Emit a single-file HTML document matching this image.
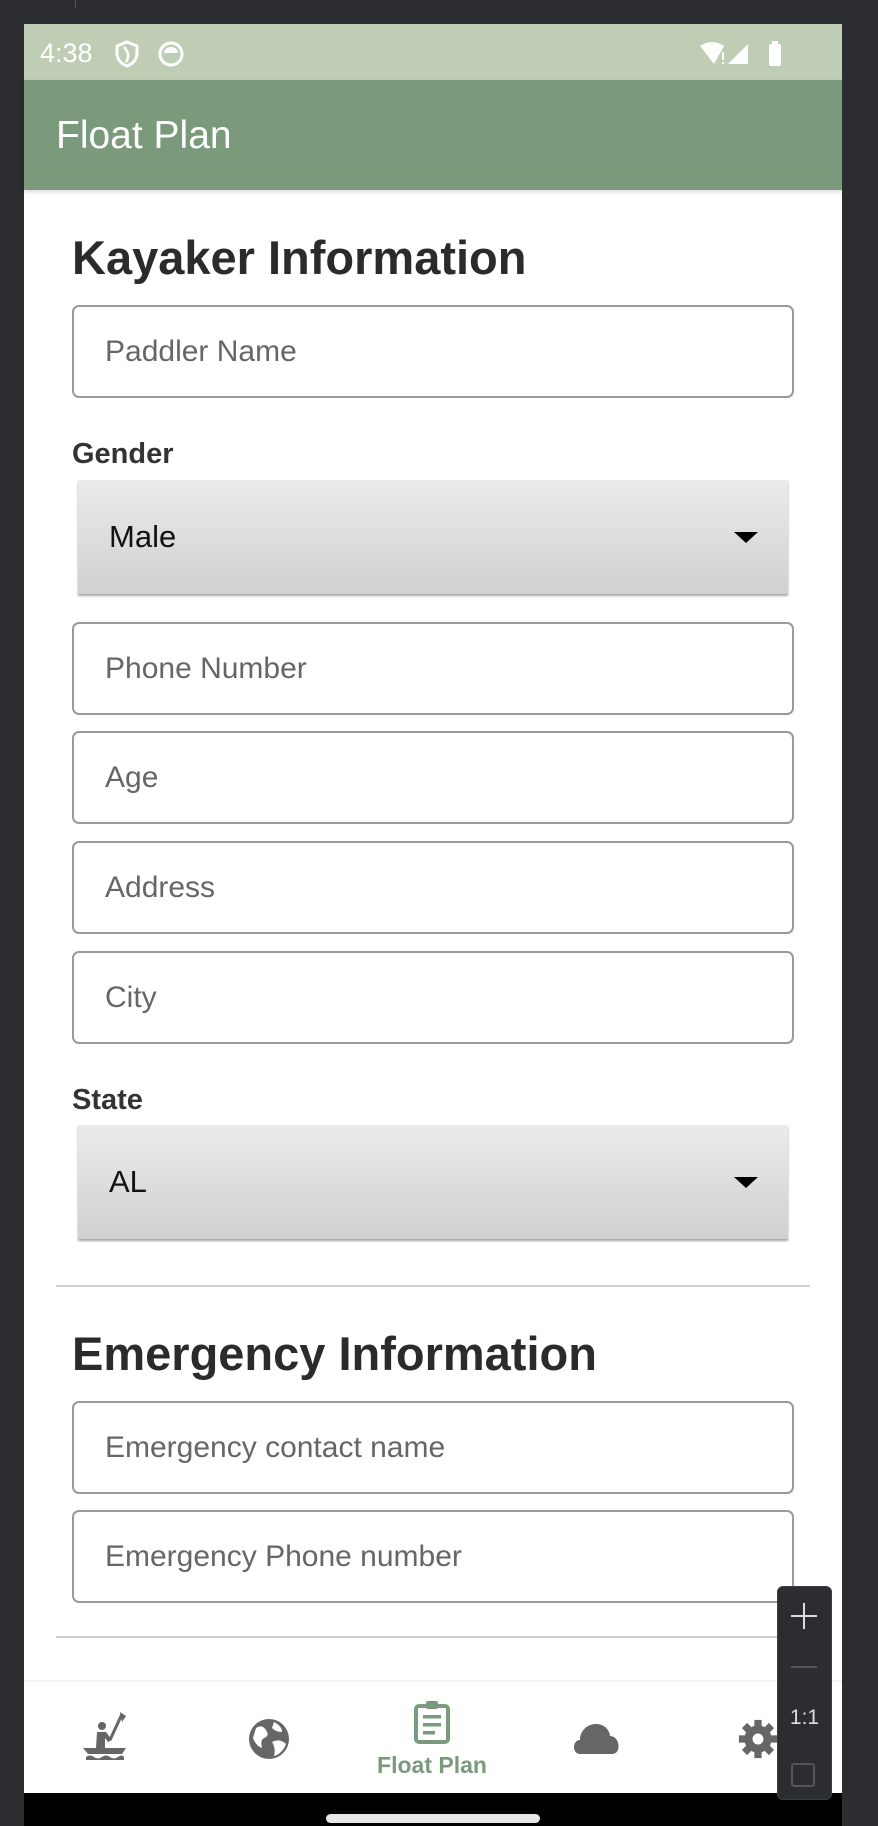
<!DOCTYPE html>
<html><head><meta charset="utf-8"><style>
*{margin:0;padding:0;box-sizing:border-box}
body{width:878px;height:1826px;background:#2b2d30;position:relative;overflow:hidden;font-family:"Liberation Sans",sans-serif}
.a{position:absolute}
.inp{position:absolute;left:72px;width:722px;height:93px;border:2px solid #9a9a9a;border-radius:7px;background:#fff;color:#666;font-size:30px;padding-left:31px;display:flex;align-items:center}
.sel{position:absolute;left:78px;width:710px;height:114px;background:linear-gradient(#ebebeb,#d0d0d0);box-shadow:0 2px 2px rgba(0,0,0,.35);color:#111;font-size:31px;padding-left:31px;display:flex;align-items:center}
.sel:after{content:"";position:absolute;right:30px;top:52px;border-left:12px solid transparent;border-right:12px solid transparent;border-top:11px solid #000}
.lab{position:absolute;left:72px;font-size:29px;font-weight:bold;color:#333}
.h{position:absolute;left:72px;font-size:47px;font-weight:bold;color:#2b2b2b}
.hr{position:absolute;left:56px;width:754px;height:2px;background:#d0d0d0}
</style></head><body>
<div class="a" style="left:0;top:0;width:878px;height:23px;background:#2b2d30"></div>
<div class="a" style="left:75px;top:0;width:1px;height:8px;background:#555"></div>
<div class="a" style="left:24px;top:24px;width:818px;height:1802px;background:#fff"></div>
<div class="a" style="left:24px;top:24px;width:818px;height:56px;background:#bfcdb5"></div>
<div class="a" style="left:40px;top:38px;color:#fff;font-size:27px">4:38</div>
<svg class="a" style="left:114px;top:40px" width="26" height="28" viewBox="0 0 26 28"><path d="M13 2 L23 6 V13 C23 20 18 24 13 26 C8 24 3 20 3 13 V6 Z" fill="none" stroke="#fff" stroke-width="3"/><path d="M10 7 C14 12 16 16 12 22" fill="none" stroke="#fff" stroke-width="2.5"/></svg>
<svg class="a" style="left:158px;top:41px" width="26" height="26"><circle cx="13" cy="13" r="11" fill="none" stroke="#fff" stroke-width="3"/><path d="M6 12 A7 6 0 0 1 20 12 Z" fill="#fff"/></svg>
<svg class="a" style="left:698px;top:40px" width="90" height="26"><path d="M2 6 Q14 -2 26 6 L16 24 Z" fill="#fff"/><rect x="24" y="12" width="2" height="8" fill="#fff"/><rect x="24" y="22" width="2" height="2" fill="#fff"/><path d="M30 24 L50 4 V24 Z" fill="#fff"/><rect x="71" y="4" width="12" height="22" rx="2" fill="#fff"/><rect x="74" y="1" width="6" height="4" fill="#fff"/></svg>
<div class="a" style="left:24px;top:80px;width:818px;height:110px;background:#7a9a7b;box-shadow:0 2px 4px rgba(0,0,0,.15)"></div>
<div class="a" style="left:56px;top:114px;color:#fff;font-size:39px">Float Plan</div>
<div class="a" style="left:875px;top:80px;width:3px;height:42px;background:#3b6fd6;border-radius:2px"></div>

<div class="h" style="top:230px">Kayaker Information</div>
<div class="inp" style="top:305px">Paddler Name</div>
<div class="lab" style="top:438px">Gender</div>
<div class="sel" style="top:480px">Male</div>
<div class="inp" style="top:622px">Phone Number</div>
<div class="inp" style="top:731px">Age</div>
<div class="inp" style="top:841px">Address</div>
<div class="inp" style="top:951px">City</div>
<div class="lab" style="top:1084px">State</div>
<div class="sel" style="top:1125px">AL</div>
<div class="hr" style="top:1285px"></div>
<div class="h" style="top:1326px">Emergency Information</div>
<div class="inp" style="top:1401px">Emergency contact name</div>
<div class="inp" style="top:1510px">Emergency Phone number</div>
<div class="hr" style="top:1636px"></div>

<div class="a" style="left:24px;top:1680px;width:818px;height:2px;background:#f3f3f3"></div>
<svg class="a" style="left:80px;top:1712px" width="50" height="52" viewBox="0 0 50 52"><path d="M42 2 L30 28" stroke="#666" stroke-width="3"/><path d="M40 0 L46 4 L42 10 Z" fill="#666"/><circle cx="22" cy="14" r="4" fill="#666"/><path d="M17 20 H26 L32 28 L28 30 L25 26 V36 H16 Z" fill="#666"/><path d="M3 36 H46 L42 42 H8 Z" fill="#666"/><path d="M6 45 q4 -3 8 0 q4 3 8 0 q4 -3 8 0 q4 3 8 0 q4 -3 6 0 v3 h-38z" fill="#666"/></svg>
<svg class="a" style="left:248px;top:1718px" width="42" height="42" viewBox="0 0 42 42"><circle cx="21" cy="21" r="20" fill="#666"/><path d="M8 10 Q14 6 18 12 Q22 18 16 20 Q12 22 14 30 Q8 28 5 20 Z M26 4 Q34 8 34 14 Q28 14 24 10Z M24 24 Q32 20 38 26 Q34 36 26 38 Q28 30 24 24Z" fill="#fff"/></svg>
<svg class="a" style="left:413px;top:1700px" width="38" height="44" viewBox="0 0 38 44"><rect x="3" y="6" width="32" height="36" rx="3" fill="none" stroke="#7a9a7b" stroke-width="4"/><rect x="13" y="1" width="12" height="8" rx="2" fill="#7a9a7b"/><rect x="10" y="15" width="18" height="3.5" fill="#7a9a7b"/><rect x="10" y="23" width="18" height="3.5" fill="#7a9a7b"/><rect x="10" y="31" width="12" height="3.5" fill="#7a9a7b"/></svg>
<div class="a" style="left:364px;top:1752px;width:136px;text-align:center;color:#7a9a7b;font-size:23px;font-weight:bold">Float Plan</div>
<svg class="a" style="left:572px;top:1720px" width="50" height="34" viewBox="0 0 50 34"><path d="M8 34 C0 34 0 20 8 20 C8 10 16 4 24 4 C34 4 38 12 38 16 C48 16 50 34 40 34 Z" fill="#666"/></svg>
<svg class="a" style="left:738px;top:1717px" width="40" height="44" viewBox="0 0 44 44"><g fill="#666"><circle cx="22" cy="22" r="15"/><rect x="18" y="1" width="8" height="42"/><rect x="1" y="18" width="42" height="8"/><rect x="18" y="1" width="8" height="42" transform="rotate(45 22 22)"/><rect x="18" y="1" width="8" height="42" transform="rotate(-45 22 22)"/></g><circle cx="22" cy="22" r="6" fill="#fff"/></svg>

<div class="a" style="left:24px;top:1793px;width:818px;height:33px;background:#000"></div>
<div class="a" style="left:326px;top:1814px;width:214px;height:9px;border-radius:5px;background:#e8e8e8"></div>
<div class="a" style="left:842px;top:24px;width:36px;height:1802px;background:#2b2d30"></div>
<div class="a" style="left:777px;top:1586px;width:55px;height:214px;background:#2b2d30;border:1px solid #3c3e42;border-radius:6px"></div>
<div class="a" style="left:791px;top:1615px;width:26px;height:2px;background:#ddd"></div>
<div class="a" style="left:803px;top:1603px;width:2px;height:26px;background:#ddd"></div>
<div class="a" style="left:791px;top:1666px;width:26px;height:2px;background:#555"></div>
<div class="a" style="left:777px;top:1706px;width:55px;text-align:center;color:#ddd;font-size:21px">1:1</div>
<div class="a" style="left:791px;top:1763px;width:24px;height:24px;border:2px solid #555;border-radius:3px"></div>
</body></html>
